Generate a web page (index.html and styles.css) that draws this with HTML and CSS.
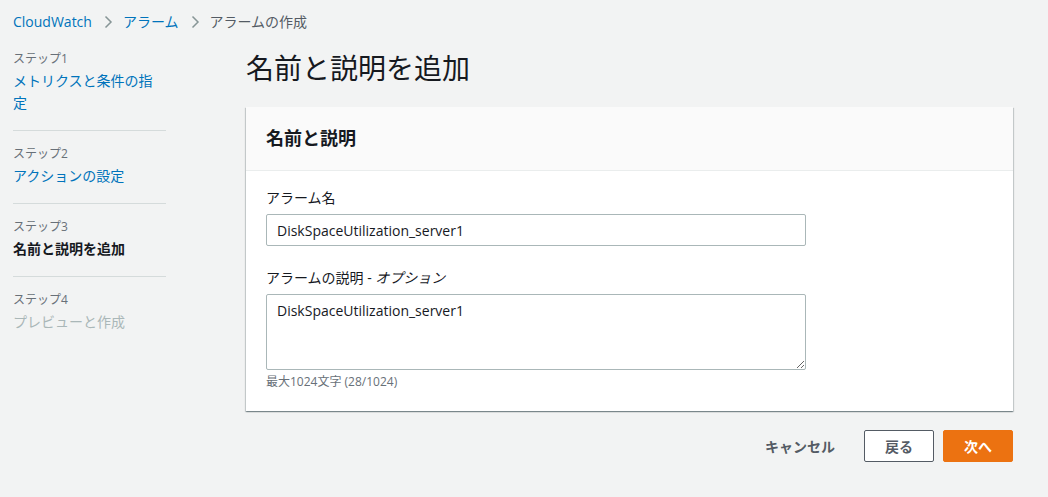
FILE: index.html
```html
<!doctype html>
<html>
<head>
    <meta charset="utf-8">
    <meta name="viewport" content="width=device-width, initial-scale=1">
    <title>アラームの作成 | CloudWatch</title>
    <link rel="stylesheet" href="styles.css">
</head>
<body>

<nav class="breadcrumbs">
    <a href="#">CloudWatch</a>
    <span class="sep">
        <svg width="16" height="16" viewBox="0 0 16 16"><path d="M5.5 2.5l5.5 5.5-5.5 5.5" fill="none" stroke="#879596" stroke-width="1.5"/></svg>
    </span>
    <a href="#">アラーム</a>
    <span class="sep">
        <svg width="16" height="16" viewBox="0 0 16 16"><path d="M5.5 2.5l5.5 5.5-5.5 5.5" fill="none" stroke="#879596" stroke-width="1.5"/></svg>
    </span>
    <span class="current">アラームの作成</span>
</nav>

<div class="layout">
    <ul class="steps">
        <li class="step">
            <div class="stepLabel">ステップ1</div>
            <a href="#" class="stepLink">メトリクスと条件の指定</a>
        </li>
        <li class="step">
            <div class="stepLabel">ステップ2</div>
            <a href="#" class="stepLink">アクションの設定</a>
        </li>
        <li class="step">
            <div class="stepLabel">ステップ3</div>
            <span class="stepCurrent">名前と説明を追加</span>
        </li>
        <li class="step">
            <div class="stepLabel">ステップ4</div>
            <span class="stepDisabled">プレビューと作成</span>
        </li>
    </ul>

    <main class="content">
        <h1>名前と説明を追加</h1>

        <section class="container">
            <div class="containerHeader">
                <h2>名前と説明</h2>
            </div>
            <div class="containerBody">
                <div class="field">
                    <label for="alarmName">アラーム名</label>
                    <input type="text" id="alarmName" value="DiskSpaceUtilization_server1">
                </div>
                <div class="field">
                    <label for="alarmDesc">アラームの説明 - <i>オプション</i></label>
                    <textarea id="alarmDesc">DiskSpaceUtilization_server1</textarea>
                    <div class="hint">最大1024文字 (28/1024)</div>
                </div>
            </div>
        </section>

        <div class="actions">
            <button class="btnLink">キャンセル</button>
            <button class="btnNormal">戻る</button>
            <button class="btnPrimary">次へ</button>
        </div>
    </main>
</div>

</body>
</html>
```

FILE: styles.css
```css
body {
    font-family: "Open Sans", "Noto Sans CJK JP", sans-serif;
    background-color: #f2f3f3;
    color: #16191f;
    margin: 0;
    padding: 0 35px 0 13px;
    font-size: 14px;
}

a {
    color: #0073bb;
    text-decoration: none;
}

.breadcrumbs {
    display: flex;
    align-items: center;
    height: 20px;
    padding-top: 12px;
    line-height: 20px;
}

.breadcrumbs .sep {
    display: flex;
    margin: 0 7px 0 8px;
}

.breadcrumbs .current {
    color: #545b64;
}

.layout {
    display: flex;
    gap: 80px;
    margin-top: 4px;
}

.steps {
    list-style: none;
    margin: 0;
    padding: 0;
    width: 153px;
    flex-shrink: 0;
}

.step {
    padding: 14px 0 16px;
    border-top: 1px solid #d5dbdb;
}

.step:first-child {
    border-top: none;
}

.stepLabel {
    font-size: 12px;
    line-height: 18px;
    color: #687078;
    margin-bottom: 2px;
}

.stepLink,
.stepCurrent,
.stepDisabled {
    display: block;
    line-height: 22px;
}

.stepCurrent {
    font-weight: bold;
    color: #16191f;
}

.stepDisabled {
    color: #aab7b8;
}

.content {
    flex: 1;
}

h1 {
    font-size: 28px;
    font-weight: normal;
    line-height: 36px;
    margin: 14px 0 21px;
}

.container {
    background: #fff;
    box-shadow: 0 1px 1px 0 rgba(0, 28, 36, 0.3), 1px 1px 1px 0 rgba(0, 28, 36, 0.15), -1px 1px 1px 0 rgba(0, 28, 36, 0.15);
}

.containerHeader {
    background: #fafafa;
    border-bottom: 1px solid #eaeded;
    padding: 19px 20px;
}

h2 {
    font-size: 18px;
    font-weight: bold;
    line-height: 25px;
    margin: 0;
}

.containerBody {
    padding: 16px 20px 20px;
}

.field {
    margin-bottom: 21px;
}

.field:last-child {
    margin-bottom: 0;
}

.field label {
    display: block;
    line-height: 22px;
    margin-bottom: 5px;
}

.field label i {
    font-style: italic;
}

.field input,
.field textarea {
    display: block;
    box-sizing: border-box;
    width: 540px;
    font-family: inherit;
    font-size: 14px;
    color: #16191f;
    border: 1px solid #aab7b8;
    border-radius: 2px;
    padding: 4px 10px;
    background: #fff;
}

.field input {
    height: 32px;
}

.field textarea {
    height: 76px;
    line-height: 22px;
    padding-top: 5px;
    resize: vertical;
}

.hint {
    font-size: 12px;
    line-height: 18px;
    color: #687078;
    margin-top: 3px;
}

.actions {
    display: flex;
    justify-content: flex-end;
    align-items: center;
    gap: 9px;
    margin-top: 19px;
}

.actions button {
    font-family: inherit;
    font-size: 14px;
    font-weight: bold;
    height: 32px;
    border-radius: 2px;
    cursor: pointer;
    padding: 0 20px;
}

.btnLink {
    background: none;
    border: none;
    color: #545b64;
    margin-right: 0;
}

.btnNormal {
    background: #fff;
    border: 1px solid #545b64;
    color: #545b64;
    width: 70px;
}

.btnPrimary {
    background: #ec7211;
    border: 1px solid #ec7211;
    color: #fff;
    width: 70px;
}
```
